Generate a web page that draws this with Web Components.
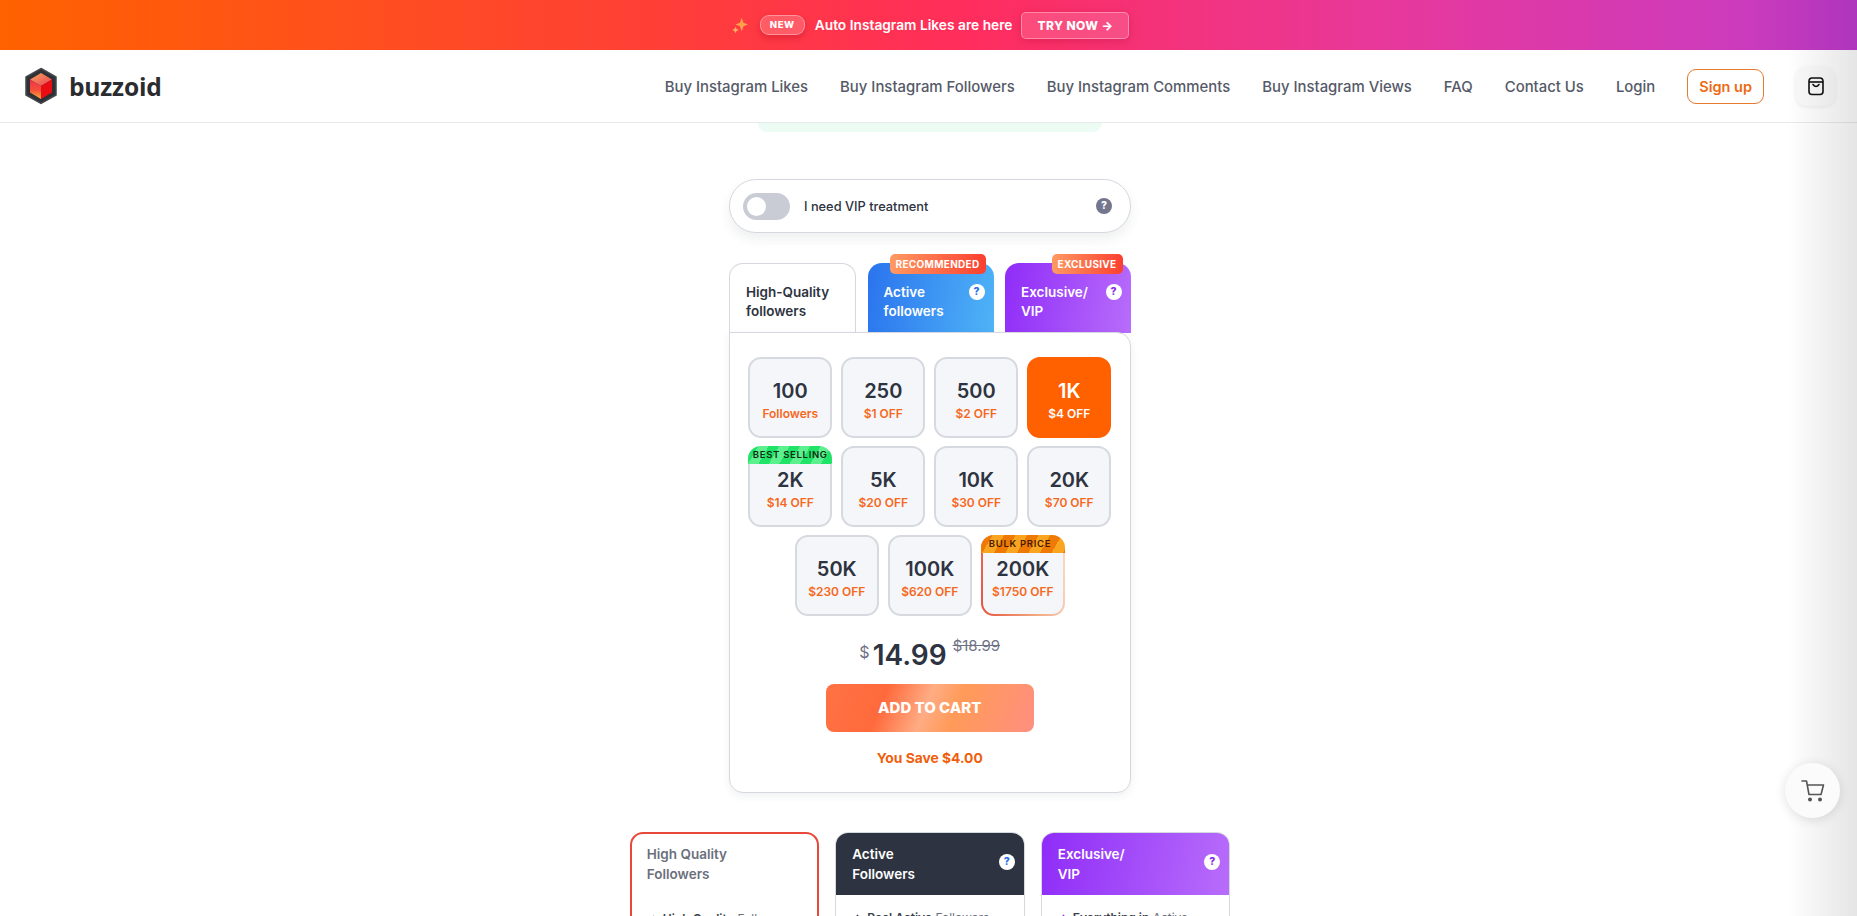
<!DOCTYPE html>
<html>
<head>
<meta charset="utf-8">
<title>Buzzoid</title>
<style>
html, body { margin: 0; height: 916px; overflow: hidden; background: #fff; }
body { font-family: Inter, "Liberation Sans", sans-serif; color: #2d3340; position: relative; }
bz-main { padding-left: 3px; }
</style>
</head>
<body>
<bz-banner></bz-banner>
<bz-header></bz-header>
<bz-main>
  <bz-vip></bz-vip>
  <bz-tabs>
    <bz-tab kind="plain" label="High-Quality followers"></bz-tab>
    <bz-tab kind="active" label="Active followers" badge="RECOMMENDED" help></bz-tab>
    <bz-tab kind="vip" label="Exclusive/ VIP" badge="EXCLUSIVE" help></bz-tab>
  </bz-tabs>
  <bz-panel>
    <bz-option qty="100" sub="Followers"></bz-option>
    <bz-option qty="250" sub="$1 OFF"></bz-option>
    <bz-option qty="500" sub="$2 OFF"></bz-option>
    <bz-option qty="1K" sub="$4 OFF" selected></bz-option>
    <bz-option qty="2K" sub="$14 OFF" ribbon="BEST SELLING" tone="green"></bz-option>
    <bz-option qty="5K" sub="$20 OFF"></bz-option>
    <bz-option qty="10K" sub="$30 OFF"></bz-option>
    <bz-option qty="20K" sub="$70 OFF"></bz-option>
    <bz-option qty="50K" sub="$230 OFF"></bz-option>
    <bz-option qty="100K" sub="$620 OFF"></bz-option>
    <bz-option qty="200K" sub="$1750 OFF" ribbon="BULK PRICE" tone="orange"></bz-option>
    <bz-checkout slot="footer"></bz-checkout>
  </bz-panel>
  <bz-compare>
    <bz-compare-card kind="plain" title="High Quality|Followers" strong="High Quality" item="Followers"></bz-compare-card>
    <bz-compare-card kind="active" title="Active|Followers" strong="Real Active" item="Followers" help></bz-compare-card>
    <bz-compare-card kind="vip" title="Exclusive/|VIP" strong="Everything in" item="Active" help></bz-compare-card>
  </bz-compare>
</bz-main>
<bz-edge></bz-edge>
<bz-float-cart></bz-float-cart>

<script>
function shadow(el, html) {
  el.attachShadow({ mode: 'open' }).innerHTML = html;
}

class BzBanner extends HTMLElement {
  connectedCallback() {
    shadow(this, `<style>
      :host { display: flex; align-items: center; justify-content: center; height: 50px; padding-left: 3px; color: #fff;
        background: linear-gradient(90deg, #ff6200 0%, #ff3e38 36%, #ff2d5c 52%, #e8389a 74%, #cc3bbd 94%, #ae35bd 100%); }
      svg { width: 18px; height: 18px; margin-right: 11px; }
      .new { font: 800 9.5px Inter, sans-serif; letter-spacing: .6px; padding: 0 9px; height: 18px; line-height: 18px; border-radius: 9px;
        background: rgba(255,255,255,.18); border: 1px solid rgba(255,255,255,.35); box-shadow: 0 3px 7px rgba(150,0,30,.3); margin-right: 10px; }
      .txt { font: 600 13.75px Inter, sans-serif; margin-right: 9px; }
      .try { font: 800 12px Inter, sans-serif; letter-spacing: .4px; height: 25px; line-height: 25px; padding: 0 15px; border-radius: 5px;
        background: rgba(255,255,255,.14); border: 1px solid rgba(255,255,255,.35); box-shadow: 0 2px 8px rgba(150,0,30,.25); }
    </style>
    <svg viewBox="0 0 16 16"><path d="M9.5 1.5l1.6 4.4 3.9 1.6-3.9 1.6-1.6 4.4-1.6-4.4-3.9-1.6 3.9-1.6z" fill="#ffa04d"/><path d="M4 9.5l.9 2 2 .9-2 .9-.9 2-.9-2-2-.9 2-.9z" fill="#ffb066"/></svg>
    <span class="new">NEW</span><span class="txt">Auto Instagram Likes are here</span><span class="try">TRY NOW →</span>`);
  }
}

class BzHeader extends HTMLElement {
  connectedCallback() {
    shadow(this, `<style>
      :host { display: flex; align-items: center; height: 72px; border-bottom: 1px solid #e8e9eb; padding: 0 22px 0 24px; background: #fff; position: relative; z-index: 2; }
      .logo { display: flex; align-items: center; gap: 11px; font: 700 24.6px "Open Sans", Inter, sans-serif; color: #2b2c30; letter-spacing: -.2px; }
      svg.cube { width: 34px; height: 38px; }
      nav { margin-left: auto; display: flex; align-items: center; gap: 32px; padding-top: 1px; font: 500 14.9px Inter, sans-serif; color: #555a68; }
      .signup { font: 600 14.5px Inter, sans-serif; color: #ee6a12; border: 1.5px solid #e67a2e; border-radius: 9px; height: 33px; line-height: 33px; padding: 0 11px; }
      .bag { width: 39px; height: 39px; margin-left: 32px; border-radius: 10px; background: #fafafa; box-shadow: 0 1px 4px rgba(0,0,0,.08); display: flex; align-items: center; justify-content: center; }
    </style>
    <div class="logo">
      <svg class="cube" viewBox="0 0 34 38">
        <defs><linearGradient id="cl" x1="0" y1="0" x2="0" y2="1"><stop offset="0" stop-color="#f2304c"/><stop offset=".55" stop-color="#f4503a"/><stop offset="1" stop-color="#f5b13d"/></linearGradient>
        <linearGradient id="ct" x1="0" y1="0" x2="1" y2="1"><stop offset="0" stop-color="#f5a45a"/><stop offset="1" stop-color="#ee3f55"/></linearGradient></defs>
        <path d="M17 1.5L32 10v18L17 36.5 2 28V10z" fill="#2f3136" stroke="#45474c" stroke-width="1.5"/>
        <path d="M17 6L28 12.5 17 19 6 12.5z" fill="url(#ct)"/>
        <path d="M6 12.5L17 19V32L6 25.5z" fill="url(#cl)"/>
        <path d="M28 12.5L17 19V32L28 25.5z" fill="#e90c12"/>
      </svg>
      <span>buzzoid</span>
    </div>
    <nav>
      <span>Buy Instagram Likes</span><span>Buy Instagram Followers</span><span>Buy Instagram Comments</span><span>Buy Instagram Views</span><span>FAQ</span><span>Contact Us</span><span>Login</span>
      <span class="signup">Sign up</span>
    </nav>
    <div class="bag"><svg width="18" height="20" viewBox="0 0 18 20" fill="none" stroke="#111" stroke-width="1.6"><path d="M2 5.5Q2 2 5 2h8q3 0 3 3.5v10q0 3-3 3H5q-3 0-3-3z"/><path d="M2 6h14"/><path d="M6 8.5q3 4 6 0" stroke-linecap="round"/></svg></div>`);
  }
}

class BzMain extends HTMLElement {
  connectedCallback() {
    shadow(this, `<style>
      :host { display: flex; flex-direction: column; align-items: center; position: relative; }
      .glow { width: 344px; height: 9px; margin-bottom: 47px; background: #ecfbf4; border-radius: 0 0 12px 12px; }
    </style><div class="glow"></div><slot></slot>`);
  }
}

class BzVip extends HTMLElement {
  connectedCallback() {
    shadow(this, `<style>
      :host { display: flex; align-items: center; box-sizing: border-box; width: 402px; height: 54px; padding: 0 18px 0 13px; border: 1px solid #d5d8de; border-radius: 27px; background: #fff; box-shadow: 0 6px 12px rgba(40,50,70,.08); font: 500 12.8px Inter, sans-serif; color: #2d3340; }
      .sw { width: 47px; height: 27px; border-radius: 14px; background: #c9ccd5; position: relative; margin-right: 14px; }
      .sw::after { content: ""; position: absolute; left: 4px; top: 4px; width: 19px; height: 19px; border-radius: 50%; background: #fff; }
      .q { margin-left: auto; width: 16px; height: 16px; border-radius: 50%; background: #73768c; color: #fff; font: 800 10.5px/16px Inter, sans-serif; text-align: center; }
    </style><span class="sw"></span><span>I need VIP treatment</span><span class="q">?</span>`);
  }
}

class BzTabs extends HTMLElement {
  connectedCallback() {
    shadow(this, `<style>
      :host { display: flex; gap: 11.5px; width: 402px; margin-top: 30px; position: relative; z-index: 1; height: 70px; }
    </style><slot></slot>`);
  }
}

class BzTab extends HTMLElement {
  connectedCallback() {
    const kind = this.getAttribute('kind');
    const badge = this.getAttribute('badge');
    const help = this.hasAttribute('help');
    const qc = kind === 'vip' ? '#8a2be8' : '#2b6fe8';
    shadow(this, `<style>
      :host { display: block; flex: 0 0 126px; box-sizing: border-box; height: 70px; border-radius: 14px 14px 0 0; position: relative; padding: 20px 30px 0 16px; font: 600 13.5px/19px Inter, sans-serif; }
      :host([kind="plain"]) { flex-basis: 127px; background: #fff; border: 1px solid #d5d8de; border-bottom: 0; padding: 19px 6px 0 16px; color: #2d3340; }
      :host([kind="active"]) { background: linear-gradient(100deg, #2a73ee, #4fb4f7); color: #fff; }
      :host([kind="vip"]) { flex-basis: 125.5px; background: linear-gradient(100deg, #8f2cf8, #b86dfb); color: #fff; }
      .badge { position: absolute; top: -9px; right: 8px; height: 20px; padding: 0 6px; border-radius: 5px; font: 700 10px/20px Inter, sans-serif; letter-spacing: .3px; color: #fff; background: linear-gradient(90deg, #ff9a62, #fb3f30); white-space: nowrap; }
      .q { position: absolute; right: 9px; top: 21px; width: 16px; height: 16px; border-radius: 50%; background: #fff; color: ${qc}; font: 800 10.5px/16px Inter, sans-serif; text-align: center; }
    </style>${badge ? `<span class="badge">${badge}</span>` : ''}${help ? '<span class="q">?</span>' : ''}${this.getAttribute('label')}`);
  }
}

class BzPanel extends HTMLElement {
  connectedCallback() {
    shadow(this, `<style>
      :host { display: block; box-sizing: border-box; width: 402px; height: 461px; margin-top: -1px; padding: 24px 18px 0 17.5px; border: 1px solid #d5d8de; border-radius: 0 14px 14px 14px; background: #fff; box-shadow: 0 3px 8px rgba(40,50,70,.07); position: relative; z-index: 2; }
      .grid { display: flex; flex-wrap: wrap; justify-content: center; gap: 9px; }
    </style><div class="grid"><slot></slot></div><slot name="footer"></slot>`);
  }
}

class BzOption extends HTMLElement {
  connectedCallback() {
    const ribbon = this.getAttribute('ribbon');
    shadow(this, `<style>
      :host { display: flex; flex-direction: column; align-items: center; box-sizing: border-box; width: 84px; height: 81px; padding-top: 20px; margin-bottom: -1px; border: 2px solid #d6d9df; border-radius: 13px; background: #f5f6f9; position: relative; }
      :host([selected]) { background: #ff6000; border-color: #ff6000; }
      :host([tone="orange"]) { border: 2px solid transparent; background: linear-gradient(#f5f6f9, #f5f6f9) padding-box, linear-gradient(80deg, #e5533d 0%, #f0a078 50%, #fbdcc6 100%) border-box; }
      b { font: 600 20px/24px Inter, sans-serif; color: #2d3340; }
      span { font: 600 12px/16px Inter, sans-serif; color: #f5691e; margin-top: 3px; white-space: nowrap; }
      :host([selected]) b, :host([selected]) span { color: #fff; }
      .rb { position: absolute; left: -2px; right: -2px; top: -2px; height: 18px; font: 600 9.5px/17px Inter, sans-serif; letter-spacing: .7px; color: #142a14; text-align: center; margin: 0; border-radius: 13px 13px 0 0;
        background: repeating-linear-gradient(120deg, #1fe467 0 9px, #5cf08f 9px 18px); }
      :host([tone="orange"]) .rb { color: #4a1a00; text-align: left; padding-left: 8px; box-sizing: border-box;
        background: repeating-linear-gradient(120deg, #ee7a05 0 10px, #f9a51f 10px 20px); }
    </style>${ribbon ? `<span class="rb">${ribbon}</span>` : ''}<b>${this.getAttribute('qty')}</b><span>${this.getAttribute('sub')}</span>`);
  }
}

class BzCheckout extends HTMLElement {
  connectedCallback() {
    shadow(this, `<style>
      :host { display: flex; flex-direction: column; align-items: center; margin-top: 20px; }
      .price { display: flex; align-items: flex-start; height: 40px; color: #2d3340; }
      .cur { font: 400 16px/20px Inter, sans-serif; color: #6e7285; margin: 7px 3px 0 0; }
      .amt { font: 600 28px/40px Inter, sans-serif; }
      .old { font: 400 15px/20px Inter, sans-serif; color: #6e7285; text-decoration: line-through; margin: 1px 0 0 6px; }
      .btn { width: 208px; height: 48px; margin-top: 9px; border-radius: 8px; color: #fff; font: 800 15px/48px Inter, sans-serif; text-align: center;
        background: linear-gradient(112deg, #ff7244 0%, #ff6a3c 28%, #ffac84 48%, #ff9a58 62%, #ff8f80 100%); }
      .save { font: 700 13.8px/18px Inter, sans-serif; color: #f05e0c; margin-top: 17px; }
    </style>
    <div class="price"><span class="cur">$</span><span class="amt">14.99</span><span class="old">$18.99</span></div>
    <div class="btn">ADD TO CART</div>
    <div class="save">You Save $4.00</div>`);
  }
}

class BzCompare extends HTMLElement {
  connectedCallback() {
    shadow(this, `<style>
      :host { display: flex; gap: 16px; margin-top: 39px; align-items: flex-start; }
    </style><slot></slot>`);
  }
}

class BzCompareCard extends HTMLElement {
  connectedCallback() {
    const title = this.getAttribute('title').split('|').join('<br>');
    const kind = this.getAttribute('kind');
    const tick = kind === 'vip' ? '#8a2be8' : '#3a3f4c';
    const qc = kind === 'vip' ? '#8a2be8' : '#2b6fe8';
    shadow(this, `<style>
      :host { display: block; box-sizing: border-box; width: 189.5px; height: 240px; border-radius: 13px; background: #fff; border: 1px solid #d5d8de; overflow: hidden; }
      :host([kind="plain"]) { border: 2px solid #e8483a; }
      .head { height: 62px; box-sizing: border-box; padding: 11px 16px 0; font: 600 13.5px/20px Inter, sans-serif; position: relative; color: #fff; }
      :host([kind="plain"]) .head { color: #6b6f7c; padding: 10px 15px 0; }
      :host([kind="active"]) .head { background: #2d3340; }
      :host([kind="vip"]) .head { background: linear-gradient(100deg, #8f2cf8, #b86dfb); }
      .q { position: absolute; right: 9px; top: 21px; width: 16px; height: 16px; border-radius: 50%; background: #fff; color: ${qc}; font: 800 10.5px/16px Inter, sans-serif; text-align: center; }
      ul { margin: 14px 0 0; padding: 0 14px; list-style: none; font: 400 12px/18px Inter, sans-serif; color: #6b6f7c; white-space: nowrap; }
      li { display: flex; align-items: center; gap: 8px; }
      li b { font-weight: 600; color: #3a3f4c; }
      svg { flex: none; }
    </style><div class="head">${title}${this.hasAttribute('help') ? '<span class="q">?</span>' : ''}</div>
    <ul><li><svg width="9" height="9" viewBox="0 0 9 9" fill="none" stroke="${tick}" stroke-width="1.6"><path d="M1 5l2.2 2.5L8 1"/></svg><span><b>${this.getAttribute('strong')}</b> ${this.getAttribute('item')}</span></li></ul>`);
  }
}

class BzEdge extends HTMLElement {
  connectedCallback() {
    shadow(this, `<style>
      :host { display: block; position: absolute; top: 50px; right: 0; bottom: 0; width: 70px; z-index: 3; pointer-events: none;
        background: linear-gradient(90deg, rgba(0,0,0,0), rgba(0,0,0,.1)); }
    </style>`);
  }
}

class BzFloatCart extends HTMLElement {
  connectedCallback() {
    shadow(this, `<style>
      :host { display: flex; align-items: center; justify-content: center; position: absolute; left: 1785px; top: 763px; width: 55px; height: 55px; border-radius: 50%; background: #fbfbfb; box-shadow: 0 2px 12px rgba(0,0,0,.12); z-index: 4; }
    </style><svg width="26" height="26" viewBox="0 0 26 26" fill="none" stroke="#555" stroke-width="1.6" stroke-linejoin="round" stroke-linecap="round"><path d="M2 3h4.5l2.5 13.5h12L23.5 7H7.5"/><circle cx="10" cy="21.5" r="1.2" fill="#555"/><circle cx="20" cy="21.5" r="1.2" fill="#555"/></svg>`);
  }
}

customElements.define('bz-banner', BzBanner);
customElements.define('bz-header', BzHeader);
customElements.define('bz-main', BzMain);
customElements.define('bz-vip', BzVip);
customElements.define('bz-tabs', BzTabs);
customElements.define('bz-tab', BzTab);
customElements.define('bz-panel', BzPanel);
customElements.define('bz-option', BzOption);
customElements.define('bz-checkout', BzCheckout);
customElements.define('bz-compare', BzCompare);
customElements.define('bz-compare-card', BzCompareCard);
customElements.define('bz-edge', BzEdge);
customElements.define('bz-float-cart', BzFloatCart);
</script>
</body>
</html>
